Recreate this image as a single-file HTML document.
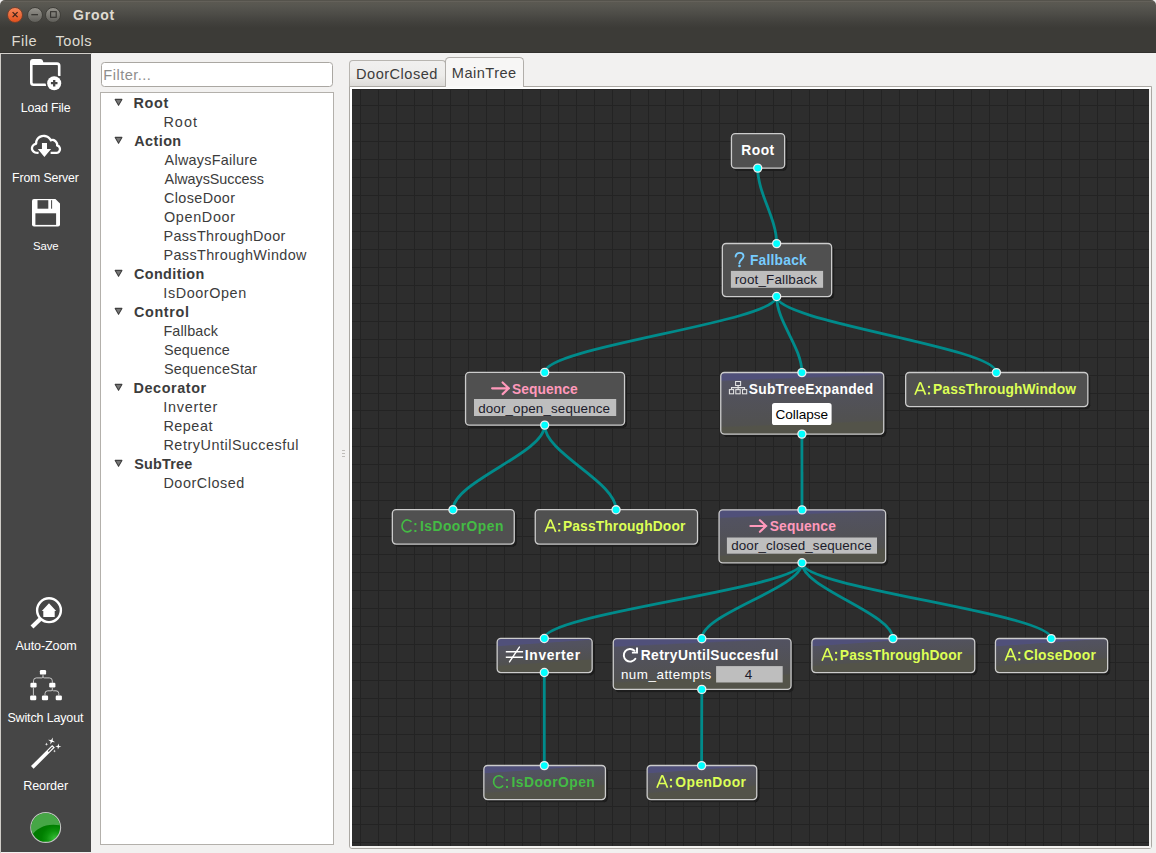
<!DOCTYPE html>
<html><head><meta charset="utf-8"><title>Groot</title>
<style>
html,body{margin:0;padding:0;}
body{width:1156px;height:853px;position:relative;overflow:hidden;background:#f2f1f0;font-family:"Liberation Sans", sans-serif;}
.abs{position:absolute;}
.t{position:absolute;white-space:pre;line-height:normal;font-family:"Liberation Sans", sans-serif;}
#title{left:0;top:0;width:1156px;height:29px;background:linear-gradient(#55534c 0px,#55534c 1px,#64615a 1px,#64615a 2px,#5b5952 2px,#575650 6px,#4d4c47 14px,#42413d 22px,#3c3b37 28px);border-radius:5px 5px 0 0;}
#menubar{left:0;top:28px;width:1156px;height:24px;background:#3c3b37;}
#sep{left:0;top:52px;width:1156px;height:1px;background:#32312e;}
#sep2{left:0;top:53px;width:92px;height:1px;background:#d3d0cb;}
#leftedge{left:0;top:54px;width:1px;height:799px;background:#cfccc7;}
#sidebar{left:1px;top:54px;width:90px;height:798px;background:#464646;}
.wb{position:absolute;top:6.5px;width:16px;height:16px;border-radius:50%;box-sizing:border-box;}
#filter{left:101px;top:62px;width:232px;height:25px;box-sizing:border-box;border:1px solid #aaa7a2;border-radius:3.5px;background:#fff;}
#list{left:100px;top:92px;width:234px;height:753px;box-sizing:border-box;border:1px solid #b3b0ab;background:#fff;}
#pane{left:349px;top:86px;width:803px;height:763px;box-sizing:border-box;border:1px solid #aba8a3;background:#fff;border-radius:0 0 3px 3px;}
#canvasbg{left:352px;top:89px;width:797px;height:757px;background:#2d2d2d;}
svg.cv{position:absolute;left:352px;top:89px;}
#tab1{left:349px;top:60px;width:97px;height:27px;box-sizing:border-box;border:1px solid #b8b5b0;border-bottom:none;border-radius:4px 4px 0 0;background:linear-gradient(#f1f0ef,#edecea 55%,#dcdad7);}
#tab2{left:445px;top:57px;width:79px;height:30px;box-sizing:border-box;border:1px solid #b1aeaa;border-bottom:none;border-radius:4.5px 4.5px 0 0;background:#f7f6f5;}
#tab2b{left:446px;top:86px;width:77px;height:2px;background:#f9f9f8;}
</style></head>
<body>
<div id="title" class="abs"></div><div id="menubar" class="abs"></div><div id="sep" class="abs"></div>
<div class="wb" style="left:7.2px;background:linear-gradient(#f68659,#e2511d);border:1px solid #74402d;"></div>
<div class="wb" style="left:26.5px;background:linear-gradient(#94928b,#605f5a);border:1px solid #403f3a;"></div>
<div class="wb" style="left:45.4px;background:linear-gradient(#94928b,#605f5a);border:1px solid #403f3a;"></div>
<svg class="abs" style="left:0;top:0" width="70" height="29" viewBox="0 0 70 29"><path d="M12.6 12.1L17.6 17.1M17.6 12.1L12.6 17.1" stroke="#3f241b" stroke-width="1.3" fill="none"/><path d="M31.3 14.7H38" stroke="#33322e" stroke-width="1.2" fill="none"/><rect x="50.6" y="11.7" width="5.6" height="5.6" stroke="#33322e" stroke-width="1.1" fill="none"/></svg>
<div id="sidebar" class="abs"></div><div id="sep2" class="abs"></div><div id="leftedge" class="abs"></div>
<svg class="abs" style="left:0;top:0" width="92" height="853" viewBox="0 0 92 853"><g><path d="M47 84.8H33.6Q31.3 84.8 31.3 82.5V62.6M31.3 63.6H57.0Q59.2 63.6 59.2 65.8V76" fill="none" stroke="#fff" stroke-width="2.6" stroke-linejoin="round" stroke-linecap="butt"/><path d="M30.0 64.5V61.8Q30 58.9 32.9 58.9H40.4Q42.5 58.9 43.0 61.0L43.6 64.5Z" fill="#fff"/><circle cx="54.2" cy="83.2" r="8.6" fill="#464646"/><circle cx="54.2" cy="83.2" r="7.0" fill="#fff"/><path d="M50.9 83.2H57.5M54.2 79.9V86.5" stroke="#464646" stroke-width="2.3" fill="none"/></g><g><path d="M38.60 152.90C38.00 152.83 36.02 152.93 35.00 152.50C33.98 152.07 33.00 151.12 32.50 150.30C32.00 149.48 31.83 148.48 32.00 147.60C32.17 146.72 32.82 145.65 33.50 145.00C34.18 144.35 35.67 143.92 36.10 143.70C36.17 143.23 36.12 141.87 36.50 140.90C36.88 139.93 37.52 138.68 38.40 137.90C39.28 137.12 40.73 136.52 41.80 136.20C42.87 135.88 43.80 135.88 44.80 136.00C45.80 136.12 46.93 136.40 47.80 136.90C48.67 137.40 49.50 138.43 50.00 139.00C50.50 139.57 50.67 140.08 50.80 140.30C51.17 140.23 52.20 139.73 53.00 139.90C53.80 140.07 54.93 140.70 55.60 141.30C56.27 141.90 56.75 142.82 57.00 143.50C57.25 144.18 57.08 145.08 57.10 145.40C57.42 145.58 58.52 145.88 59.00 146.50C59.48 147.12 60.00 148.22 60.00 149.10C60.00 149.98 59.53 151.17 59.00 151.80C58.47 152.43 58.20 152.72 56.80 152.90C55.40 153.08 51.63 152.90 50.60 152.90" fill="none" stroke="#fff" stroke-width="2.3" stroke-linecap="butt" stroke-linejoin="round"/><path d="M41.95 142.95H47.0V148.95H51.1L44.4 157.0L37.8 148.95H41.95Z" fill="#fff"/></g><g><path d="M34.0 198.9H55.4L60.0 203.5V224.6Q60.0 226.6 58.0 226.6H34.0Q32.0 226.6 32.0 224.6V200.9Q32.0 198.9 34.0 198.9Z" fill="#fff"/><rect x="37.5" y="200.2" width="10.8" height="8.5" fill="#464646"/><rect x="51.1" y="200.2" width="1.0" height="8.5" fill="#464646"/><rect x="35.4" y="213.3" width="20.7" height="11.6" fill="#464646"/></g><g><circle cx="49.0" cy="610.2" r="11.9" fill="none" stroke="#fff" stroke-width="2.4"/><path d="M40.6 618.8L32.0 627.0" stroke="#fff" stroke-width="4.2" fill="none"/><path d="M49.0 603.2L56.2 610.9H54.7V616.9H43.3V610.9H41.8Z" fill="#fff"/></g><g><rect x="39.9" y="670.0" width="6.2" height="4.6" rx="1.2" fill="#fff"/><rect x="30.4" y="682.8" width="6.2" height="4.6" rx="1.2" fill="#fff"/><rect x="49.2" y="682.8" width="6.2" height="4.6" rx="1.2" fill="#fff"/><rect x="30.1" y="695.6" width="6.2" height="4.6" rx="1.2" fill="#fff"/><rect x="41.9" y="695.6" width="6.2" height="4.6" rx="1.2" fill="#fff"/><rect x="55.7" y="695.6" width="6.2" height="4.6" rx="1.2" fill="#fff"/><path d="M43 674.5V676.8M33.5 683V680.8Q33.5 677.9 36.4 677.9H41.8Q43 677.9 43 676.6Q43 677.9 44.2 677.9H49.4Q52.3 677.9 52.3 680.8V683M33.4 687.5V695.5M52.3 687.5V689.6M45 695.6V693.6Q45 690.8 47.8 690.8H51.1Q52.3 690.8 52.3 689.6Q52.3 690.8 53.5 690.8H56Q58.8 690.8 58.8 693.6V695.6" fill="none" stroke="#cfcfcf" stroke-width="0.95"/></g><g><path d="M32.3 767.4L53.5 746.2" stroke="#fff" stroke-width="3.7" fill="none"/><path d="M48.2 751.5L52.6 747.1" stroke="#464646" stroke-width="1.3" fill="none"/><g transform="rotate(20 51.6 741.0)"><path d="M51.6 737.3L52.414 740.186L55.300000000000004 741.0L52.414 741.814L51.6 744.7L50.786 741.814L47.9 741.0L50.786 740.186Z" fill="#fff"/></g><g transform="rotate(6 58.3 746.5)"><path d="M58.3 743.4L58.982 745.818L61.4 746.5L58.982 747.182L58.3 749.6L57.617999999999995 747.182L55.199999999999996 746.5L57.617999999999995 745.818Z" fill="#fff"/></g><path d="M46.5 742.4000000000001L46.896 743.8040000000001L48.3 744.2L46.896 744.596L46.5 746.0L46.104 744.596L44.7 744.2L46.104 743.8040000000001Z" fill="#fff"/><path d="M54.5 749.6L54.83 750.77L56.0 751.1L54.83 751.4300000000001L54.5 752.6L54.17 751.4300000000001L53.0 751.1L54.17 750.77Z" fill="#fff"/></g><defs><radialGradient id="led" gradientUnits="userSpaceOnUse" cx="55" cy="839" r="17"><stop offset="0" stop-color="#3cc23c"/><stop offset="0.25" stop-color="#22a822"/><stop offset="0.5" stop-color="#0c920c"/><stop offset="0.8" stop-color="#008000"/><stop offset="1" stop-color="#007a00"/></radialGradient><clipPath id="ledc"><circle cx="45.7" cy="827.5" r="14.3"/></clipPath></defs><circle cx="45.7" cy="827.5" r="14.9" fill="url(#led)" stroke="#c4c4c4" stroke-width="1.1"/><path d="M30 838C36 828 46 822.5 61 825.5V810H30Z" fill="#55b055" opacity="0.82" clip-path="url(#ledc)"/></svg>
<div id="filter" class="abs"></div><div id="list" class="abs"></div>
<svg class="abs" style="left:100px;top:92px" width="40" height="752" viewBox="100 92 40 752"><defs><linearGradient id="ag" x1="0" y1="0" x2="0" y2="1"><stop offset="0" stop-color="#6e6e6e"/><stop offset="1" stop-color="#3f3f3f"/></linearGradient></defs><path d="M115.2 99.4H121.9L118.55 105.3Z" fill="#777" stroke="#404040" stroke-width="1.1" stroke-linejoin="round"/><path d="M115.2 137.4H121.9L118.55 143.3Z" fill="#777" stroke="#404040" stroke-width="1.1" stroke-linejoin="round"/><path d="M115.2 270.4H121.9L118.55 276.3Z" fill="#777" stroke="#404040" stroke-width="1.1" stroke-linejoin="round"/><path d="M115.2 308.4H121.9L118.55 314.3Z" fill="#777" stroke="#404040" stroke-width="1.1" stroke-linejoin="round"/><path d="M115.2 384.4H121.9L118.55 390.3Z" fill="#777" stroke="#404040" stroke-width="1.1" stroke-linejoin="round"/><path d="M115.2 460.4H121.9L118.55 466.3Z" fill="#777" stroke="#404040" stroke-width="1.1" stroke-linejoin="round"/></svg>
<div class="abs" style="left:342px;top:450px;width:3px;height:1px;background:#bfbdb9"></div><div class="abs" style="left:342px;top:453px;width:3px;height:1px;background:#bfbdb9"></div><div class="abs" style="left:342px;top:456px;width:3px;height:1px;background:#bfbdb9"></div>
<div id="tab1" class="abs"></div><div id="pane" class="abs"></div><div id="tab2" class="abs"></div><div id="tab2b" class="abs"></div>
<div class="abs" style="left:1149px;top:89px;width:2px;height:759px;background:#f3f2f0"></div><div class="abs" style="left:352px;top:846px;width:799px;height:2px;background:#f3f2f0"></div>
<div id="canvasbg" class="abs"></div>
<svg class="cv" width="797" height="757" viewBox="352 89 797 757" font-family='"Liberation Sans", sans-serif'>
<defs><filter id="sh" x="-10%" y="-20%" width="125%" height="150%"><feGaussianBlur stdDeviation="0.7"/></filter>
<linearGradient id="g_subtree" gradientUnits="userSpaceOnUse" x1="720.50" y1="379.90" x2="722.35" y2="427.93"><stop offset="0" stop-color="#50507a"/><stop offset="0.04" stop-color="#525261"/><stop offset="0.96" stop-color="#515150"/><stop offset="1" stop-color="#535349"/></linearGradient>
<linearGradient id="g_seq2" gradientUnits="userSpaceOnUse" x1="718.80" y1="517.20" x2="720.56" y2="556.62"><stop offset="0" stop-color="#50507a"/><stop offset="0.04" stop-color="#525261"/><stop offset="0.96" stop-color="#515150"/><stop offset="1" stop-color="#535349"/></linearGradient>
<linearGradient id="g_inverter" gradientUnits="userSpaceOnUse" x1="496.90" y1="645.80" x2="498.31" y2="666.30"><stop offset="0" stop-color="#50507a"/><stop offset="0.04" stop-color="#525261"/><stop offset="0.96" stop-color="#515150"/><stop offset="1" stop-color="#535349"/></linearGradient>
<linearGradient id="g_retry" gradientUnits="userSpaceOnUse" x1="613.00" y1="646.00" x2="614.73" y2="683.22"><stop offset="0" stop-color="#50507a"/><stop offset="0.04" stop-color="#525261"/><stop offset="0.96" stop-color="#515150"/><stop offset="1" stop-color="#535349"/></linearGradient>
<linearGradient id="g_ptd2" gradientUnits="userSpaceOnUse" x1="811.60" y1="645.90" x2="813.01" y2="666.30"><stop offset="0" stop-color="#50507a"/><stop offset="0.04" stop-color="#525261"/><stop offset="0.96" stop-color="#515150"/><stop offset="1" stop-color="#535349"/></linearGradient>
<linearGradient id="g_closedoor" gradientUnits="userSpaceOnUse" x1="995.20" y1="645.90" x2="996.61" y2="666.30"><stop offset="0" stop-color="#50507a"/><stop offset="0.04" stop-color="#525261"/><stop offset="0.96" stop-color="#515150"/><stop offset="1" stop-color="#535349"/></linearGradient>
<linearGradient id="g_isdoor2" gradientUnits="userSpaceOnUse" x1="483.60" y1="772.90" x2="485.01" y2="793.30"><stop offset="0" stop-color="#50507a"/><stop offset="0.04" stop-color="#525261"/><stop offset="0.96" stop-color="#515150"/><stop offset="1" stop-color="#535349"/></linearGradient>
<linearGradient id="g_opendoor" gradientUnits="userSpaceOnUse" x1="646.90" y1="772.90" x2="648.31" y2="793.30"><stop offset="0" stop-color="#50507a"/><stop offset="0.04" stop-color="#525261"/><stop offset="0.96" stop-color="#515150"/><stop offset="1" stop-color="#535349"/></linearGradient>
</defs>
<path d="M360.5 89V846M378.5 89V846M396.5 89V846M414.5 89V846M432.5 89V846M450.5 89V846M468.5 89V846M486.5 89V846M504.5 89V846M522.5 89V846M540.5 89V846M558.5 89V846M576.5 89V846M594.5 89V846M612.5 89V846M630.5 89V846M648.5 89V846M665.5 89V846M683.5 89V846M701.5 89V846M719.5 89V846M737.5 89V846M755.5 89V846M773.5 89V846M791.5 89V846M809.5 89V846M827.5 89V846M845.5 89V846M863.5 89V846M881.5 89V846M899.5 89V846M917.5 89V846M935.5 89V846M953.5 89V846M971.5 89V846M989.5 89V846M1007.5 89V846M1025.5 89V846M1043.5 89V846M1061.5 89V846M1079.5 89V846M1097.5 89V846M1115.5 89V846M1133.5 89V846M352 105.5H1149M352 123.5H1149M352 141.5H1149M352 159.5H1149M352 177.5H1149M352 195.5H1149M352 213.5H1149M352 231.5H1149M352 249.5H1149M352 267.5H1149M352 285.5H1149M352 303.5H1149M352 321.5H1149M352 339.5H1149M352 357.5H1149M352 375.5H1149M352 393.5H1149M352 410.5H1149M352 428.5H1149M352 446.5H1149M352 464.5H1149M352 482.5H1149M352 500.5H1149M352 518.5H1149M352 536.5H1149M352 554.5H1149M352 572.5H1149M352 590.5H1149M352 608.5H1149M352 626.5H1149M352 644.5H1149M352 662.5H1149M352 680.5H1149M352 698.5H1149M352 716.5H1149M352 734.5H1149M352 752.5H1149M352 770.5H1149M352 788.5H1149M352 806.5H1149M352 824.5H1149M352 842.5H1149" stroke="#232323" stroke-width="1" fill="none" shape-rendering="crispEdges"/>
<path d="M352 89.5H1149" stroke="#262626" stroke-width="1" shape-rendering="crispEdges"/>
<path d="M757.70 168.20C757.70 193.30 776.65 218.40 776.65 243.50" fill="none" stroke="#008b8b" stroke-width="2.8"/>
<path d="M776.65 296.60C776.65 321.83 544.70 347.07 544.70 372.30" fill="none" stroke="#008b8b" stroke-width="2.8"/>
<path d="M776.65 296.60C776.65 321.90 801.90 347.20 801.90 372.50" fill="none" stroke="#008b8b" stroke-width="2.8"/>
<path d="M776.65 296.60C776.65 321.90 996.40 347.20 996.40 372.50" fill="none" stroke="#008b8b" stroke-width="2.8"/>
<path d="M544.70 425.20C544.70 453.37 452.95 481.53 452.95 509.70" fill="none" stroke="#008b8b" stroke-width="2.8"/>
<path d="M544.70 425.20C544.70 453.37 616.05 481.53 616.05 509.70" fill="none" stroke="#008b8b" stroke-width="2.8"/>
<path d="M801.90 434.20C801.90 459.40 802.00 484.60 802.00 509.80" fill="none" stroke="#008b8b" stroke-width="2.8"/>
<path d="M802.00 562.90C802.00 588.07 544.30 613.23 544.30 638.40" fill="none" stroke="#008b8b" stroke-width="2.8"/>
<path d="M802.00 562.90C802.00 588.13 701.80 613.37 701.80 638.60" fill="none" stroke="#008b8b" stroke-width="2.8"/>
<path d="M802.00 562.90C802.00 588.10 892.95 613.30 892.95 638.50" fill="none" stroke="#008b8b" stroke-width="2.8"/>
<path d="M802.00 562.90C802.00 588.10 1051.20 613.30 1051.20 638.50" fill="none" stroke="#008b8b" stroke-width="2.8"/>
<path d="M544.30 672.60C544.30 703.57 544.30 734.53 544.30 765.50" fill="none" stroke="#008b8b" stroke-width="2.8"/>
<path d="M701.80 689.50C701.80 714.83 701.60 740.17 701.60 765.50" fill="none" stroke="#008b8b" stroke-width="2.8"/>
<rect x="733.30" y="135.70" width="53.80" height="35.20" rx="4.2" fill="#1a1a1a" opacity="0.9" filter="url(#sh)"/>
<rect x="731.45" y="133.70" width="53.20" height="34.45" rx="3.7" fill="#505050" stroke="#cccccc" stroke-width="1.3"/>
<circle cx="757.70" cy="168.10" r="4.05" fill="#00ffff" stroke="#ececec" stroke-width="1.3"/>
<rect x="724.20" y="245.50" width="109.90" height="53.80" rx="4.2" fill="#1a1a1a" opacity="0.9" filter="url(#sh)"/>
<rect x="722.35" y="243.50" width="109.30" height="53.05" rx="3.7" fill="#505050" stroke="#cccccc" stroke-width="1.3"/>
<g fill="none" stroke="#77ccff" stroke-width="1.85" stroke-linecap="round"><path d="M735.60 256.60 C736.00 253.60 738.00 252.80 739.80 252.80 C742.20 252.80 743.50 254.40 743.50 256.30 C743.50 259.40 739.30 260.20 739.30 263.40"/></g><circle cx="739.50" cy="266.00" r="1.35" fill="#77ccff"/>
<rect x="730.90" y="270.90" width="92.20" height="16.90" fill="#bebebe"/>
<circle cx="776.65" cy="243.60" r="4.05" fill="#00ffff" stroke="#ececec" stroke-width="1.3"/>
<circle cx="776.65" cy="296.50" r="4.05" fill="#00ffff" stroke="#ececec" stroke-width="1.3"/>
<rect x="467.40" y="374.30" width="159.60" height="53.60" rx="4.2" fill="#1a1a1a" opacity="0.9" filter="url(#sh)"/>
<rect x="465.55" y="372.30" width="159.00" height="52.85" rx="3.7" fill="#505050" stroke="#cccccc" stroke-width="1.3"/>
<path d="M492.10 388.30H509.00M502.60 382.50L508.70 388.30L502.60 394.10" fill="none" stroke="#ff99bb" stroke-width="2.15" stroke-linecap="round" stroke-linejoin="miter"/>
<rect x="474.00" y="399.00" width="142.20" height="17.00" fill="#bebebe"/>
<circle cx="544.70" cy="372.40" r="4.05" fill="#00ffff" stroke="#ececec" stroke-width="1.3"/>
<circle cx="544.70" cy="425.10" r="4.05" fill="#00ffff" stroke="#ececec" stroke-width="1.3"/>
<rect x="722.60" y="374.50" width="163.60" height="62.40" rx="4.2" fill="#1a1a1a" opacity="0.9" filter="url(#sh)"/>
<rect x="720.75" y="372.50" width="163.00" height="61.65" rx="3.7" fill="url(#g_subtree)" stroke="#cccccc" stroke-width="1.3"/>
<g fill="none" stroke="#e4e4e4" stroke-width="1.05"><rect x="735.60" y="381.50" width="5.0" height="4.0"/><rect x="729.40" y="389.60" width="4.2" height="4.2"/><rect x="735.80" y="389.60" width="4.4" height="4.2"/><rect x="742.50" y="389.60" width="4.2" height="4.2"/><path d="M738.10 385.50V389.60M731.50 389.60V387.60H744.60V389.60"/></g>
<rect x="772.00" y="403.10" width="59.60" height="22.00" rx="2.6" fill="#ffffff"/>
<circle cx="801.90" cy="372.60" r="4.05" fill="#00ffff" stroke="#ececec" stroke-width="1.3"/>
<circle cx="801.90" cy="434.10" r="4.05" fill="#00ffff" stroke="#ececec" stroke-width="1.3"/>
<rect x="907.50" y="374.50" width="182.80" height="34.80" rx="4.2" fill="#1a1a1a" opacity="0.9" filter="url(#sh)"/>
<rect x="905.65" y="372.50" width="182.20" height="34.05" rx="3.7" fill="#505050" stroke="#cccccc" stroke-width="1.3"/>
<g fill="none" stroke="#ddff55" stroke-width="1.7" stroke-linejoin="round"><path d="M915.00 394.80L919.85 382.80H920.65L925.50 394.80M916.90 390.50H923.60"/></g><rect x="927.90" y="385.70" width="2.2" height="2.2" rx="0.7" fill="#ddff55"/><rect x="927.90" y="392.20" width="2.2" height="2.2" rx="0.7" fill="#ddff55"/>
<circle cx="996.40" cy="372.60" r="4.05" fill="#00ffff" stroke="#ececec" stroke-width="1.3"/>
<rect x="394.20" y="511.70" width="122.50" height="35.10" rx="4.2" fill="#1a1a1a" opacity="0.9" filter="url(#sh)"/>
<rect x="392.35" y="509.70" width="121.90" height="34.35" rx="3.7" fill="#505050" stroke="#cccccc" stroke-width="1.3"/>
<path d="M411.45 522.08A5.35 5.95 0 1 0 411.45 529.72" fill="none" stroke="#44bb44" stroke-width="1.65" stroke-linecap="butt"/><rect x="414.35" y="523.10" width="2.1" height="2.2" rx="0.7" fill="#44bb44"/><rect x="414.35" y="529.90" width="2.1" height="2.2" rx="0.7" fill="#44bb44"/>
<circle cx="452.95" cy="509.80" r="4.05" fill="#00ffff" stroke="#ececec" stroke-width="1.3"/>
<rect x="537.10" y="511.70" width="162.90" height="35.10" rx="4.2" fill="#1a1a1a" opacity="0.9" filter="url(#sh)"/>
<rect x="535.25" y="509.70" width="162.30" height="34.35" rx="3.7" fill="#505050" stroke="#cccccc" stroke-width="1.3"/>
<g fill="none" stroke="#ddff55" stroke-width="1.7" stroke-linejoin="round"><path d="M545.20 532.00L550.05 520.00H550.85L555.70 532.00M547.10 527.70H553.80"/></g><rect x="558.10" y="522.90" width="2.2" height="2.2" rx="0.7" fill="#ddff55"/><rect x="558.10" y="529.40" width="2.2" height="2.2" rx="0.7" fill="#ddff55"/>
<circle cx="616.05" cy="509.80" r="4.05" fill="#00ffff" stroke="#ececec" stroke-width="1.3"/>
<rect x="720.90" y="511.80" width="167.20" height="53.80" rx="4.2" fill="#1a1a1a" opacity="0.9" filter="url(#sh)"/>
<rect x="719.05" y="509.80" width="166.60" height="53.05" rx="3.7" fill="url(#g_seq2)" stroke="#cccccc" stroke-width="1.3"/>
<path d="M750.40 526.00H766.30M759.90 520.20L766.00 526.00L759.90 531.80" fill="none" stroke="#ff99bb" stroke-width="2.15" stroke-linecap="round" stroke-linejoin="miter"/>
<rect x="726.90" y="537.50" width="150.10" height="16.20" fill="#bebebe"/>
<circle cx="802.00" cy="509.90" r="4.05" fill="#00ffff" stroke="#ececec" stroke-width="1.3"/>
<circle cx="802.00" cy="562.80" r="4.05" fill="#00ffff" stroke="#ececec" stroke-width="1.3"/>
<rect x="499.00" y="640.40" width="95.60" height="34.90" rx="4.2" fill="#1a1a1a" opacity="0.9" filter="url(#sh)"/>
<rect x="497.15" y="638.40" width="95.00" height="34.15" rx="3.7" fill="url(#g_inverter)" stroke="#cccccc" stroke-width="1.3"/>
<path d="M505.80 651.80H523.10M505.80 657.25H523.10" stroke="#fff" stroke-width="1.6" fill="none"/><path d="M509.50 661.80L519.40 647.10" stroke="#fff" stroke-width="1.4" stroke-linecap="round" fill="none"/>
<circle cx="544.30" cy="638.50" r="4.05" fill="#00ffff" stroke="#ececec" stroke-width="1.3"/>
<circle cx="544.30" cy="672.50" r="4.05" fill="#00ffff" stroke="#ececec" stroke-width="1.3"/>
<rect x="615.10" y="640.60" width="178.40" height="51.60" rx="4.2" fill="#1a1a1a" opacity="0.9" filter="url(#sh)"/>
<rect x="613.25" y="638.60" width="177.80" height="50.85" rx="3.7" fill="url(#g_retry)" stroke="#cccccc" stroke-width="1.3"/>
<path d="M635.38 658.73A6.3 6.3 0 1 1 634.48 650.77" fill="none" stroke="#fff" stroke-width="1.95" stroke-linecap="round"/><path d="M637.00 647.60V652.60H631.90" fill="none" stroke="#fff" stroke-width="1.95" stroke-linejoin="miter"/>
<rect x="716.10" y="666.10" width="66.60" height="16.40" fill="#bebebe"/>
<circle cx="701.80" cy="638.70" r="4.05" fill="#00ffff" stroke="#ececec" stroke-width="1.3"/>
<circle cx="701.80" cy="689.40" r="4.05" fill="#00ffff" stroke="#ececec" stroke-width="1.3"/>
<rect x="813.70" y="640.50" width="163.50" height="34.80" rx="4.2" fill="#1a1a1a" opacity="0.9" filter="url(#sh)"/>
<rect x="811.85" y="638.50" width="162.90" height="34.05" rx="3.7" fill="url(#g_ptd2)" stroke="#cccccc" stroke-width="1.3"/>
<g fill="none" stroke="#ddff55" stroke-width="1.7" stroke-linejoin="round"><path d="M822.10 660.80L826.95 648.80H827.75L832.60 660.80M824.00 656.50H830.70"/></g><rect x="835.00" y="651.70" width="2.2" height="2.2" rx="0.7" fill="#ddff55"/><rect x="835.00" y="658.20" width="2.2" height="2.2" rx="0.7" fill="#ddff55"/>
<circle cx="892.95" cy="638.60" r="4.05" fill="#00ffff" stroke="#ececec" stroke-width="1.3"/>
<rect x="997.30" y="640.50" width="112.80" height="34.80" rx="4.2" fill="#1a1a1a" opacity="0.9" filter="url(#sh)"/>
<rect x="995.45" y="638.50" width="112.20" height="34.05" rx="3.7" fill="url(#g_closedoor)" stroke="#cccccc" stroke-width="1.3"/>
<g fill="none" stroke="#ddff55" stroke-width="1.7" stroke-linejoin="round"><path d="M1005.30 660.80L1010.15 648.80H1010.95L1015.80 660.80M1007.20 656.50H1013.90"/></g><rect x="1018.20" y="651.70" width="2.2" height="2.2" rx="0.7" fill="#ddff55"/><rect x="1018.20" y="658.20" width="2.2" height="2.2" rx="0.7" fill="#ddff55"/>
<circle cx="1051.20" cy="638.60" r="4.05" fill="#00ffff" stroke="#ececec" stroke-width="1.3"/>
<rect x="485.70" y="767.50" width="122.20" height="34.80" rx="4.2" fill="#1a1a1a" opacity="0.9" filter="url(#sh)"/>
<rect x="483.85" y="765.50" width="121.60" height="34.05" rx="3.7" fill="url(#g_isdoor2)" stroke="#cccccc" stroke-width="1.3"/>
<path d="M503.05 777.88A5.35 5.95 0 1 0 503.05 785.52" fill="none" stroke="#44bb44" stroke-width="1.65" stroke-linecap="butt"/><rect x="505.95" y="778.90" width="2.1" height="2.2" rx="0.7" fill="#44bb44"/><rect x="505.95" y="785.70" width="2.1" height="2.2" rx="0.7" fill="#44bb44"/>
<circle cx="544.30" cy="765.60" r="4.05" fill="#00ffff" stroke="#ececec" stroke-width="1.3"/>
<rect x="649.00" y="767.50" width="110.20" height="34.80" rx="4.2" fill="#1a1a1a" opacity="0.9" filter="url(#sh)"/>
<rect x="647.15" y="765.50" width="109.60" height="34.05" rx="3.7" fill="url(#g_opendoor)" stroke="#cccccc" stroke-width="1.3"/>
<g fill="none" stroke="#ddff55" stroke-width="1.7" stroke-linejoin="round"><path d="M657.00 787.80L661.85 775.80H662.65L667.50 787.80M658.90 783.50H665.60"/></g><rect x="669.90" y="778.70" width="2.2" height="2.2" rx="0.7" fill="#ddff55"/><rect x="669.90" y="785.20" width="2.2" height="2.2" rx="0.7" fill="#ddff55"/>
<circle cx="701.60" cy="765.60" r="4.05" fill="#00ffff" stroke="#ececec" stroke-width="1.3"/>
<text x="741.20" y="154.90" font-size="13.8" font-weight="700" fill="#ffffff" letter-spacing="0.529" >Root</text>
<text x="749.90" y="264.70" font-size="13.8" font-weight="700" fill="#77ccff" letter-spacing="0.231" >Fallback</text>
<text x="734.73" y="283.90" font-size="13.4" font-weight="400" fill="#1b1b2b" letter-spacing="0.164" >root_Fallback</text>
<text x="511.95" y="393.60" font-size="13.8" font-weight="700" fill="#ff99bb" letter-spacing="0.069" >Sequence</text>
<text x="478.16" y="412.60" font-size="13.4" font-weight="400" fill="#1b1b2b" letter-spacing="0.138" >door_open_sequence</text>
<text x="748.65" y="393.70" font-size="13.8" font-weight="700" fill="#ffffff" letter-spacing="0.304" >SubTreeExpanded</text>
<text x="775.42" y="418.70" font-size="13.6" font-weight="400" fill="#000" letter-spacing="-0.040" >Collapse</text>
<text x="933.00" y="393.80" font-size="13.8" font-weight="700" fill="#ddff55" letter-spacing="0.127" >PassThroughWindow</text>
<text x="420.00" y="530.90" font-size="13.8" font-weight="700" fill="#44bb44" letter-spacing="0.485" >IsDoorOpen</text>
<text x="562.90" y="530.90" font-size="13.8" font-weight="700" fill="#ddff55" letter-spacing="0.151" >PassThroughDoor</text>
<text x="769.75" y="531.10" font-size="13.8" font-weight="700" fill="#ff99bb" letter-spacing="0.126" >Sequence</text>
<text x="731.26" y="550.40" font-size="13.4" font-weight="400" fill="#1b1b2b" letter-spacing="0.101" >door_closed_sequence</text>
<text x="524.80" y="659.70" font-size="13.8" font-weight="700" fill="#ffffff" letter-spacing="0.667" >Inverter</text>
<text x="640.80" y="660.00" font-size="13.8" font-weight="700" fill="#ffffff" letter-spacing="0.361" >RetryUntilSuccesful</text>
<text x="620.93" y="679.00" font-size="13.4" font-weight="400" fill="#ffffff" letter-spacing="0.503" >num_attempts</text>
<text x="744.72" y="679.00" font-size="13.4" font-weight="400" fill="#1b1b2b" letter-spacing="0.000" >4</text>
<text x="839.80" y="659.70" font-size="13.8" font-weight="700" fill="#ddff55" letter-spacing="0.137" >PassThroughDoor</text>
<text x="1023.65" y="659.70" font-size="13.8" font-weight="700" fill="#ddff55" letter-spacing="0.297" >CloseDoor</text>
<text x="511.50" y="786.70" font-size="13.8" font-weight="700" fill="#44bb44" letter-spacing="0.474" >IsDoorOpen</text>
<text x="675.35" y="786.70" font-size="13.8" font-weight="700" fill="#ddff55" letter-spacing="0.441" >OpenDoor</text>
</svg>
<span class="t" style="left:73.04px;top:7.00px;font-size:14.0px;font-weight:700;color:#dfdbd2;letter-spacing:0.767px;">Groot</span>
<span class="t" style="left:11.53px;top:33.00px;font-size:14.6px;font-weight:400;color:#dfdbd2;letter-spacing:0.548px;">File</span>
<span class="t" style="left:55.41px;top:33.00px;font-size:14.6px;font-weight:400;color:#dfdbd2;letter-spacing:0.530px;">Tools</span>
<span class="t" style="left:20.76px;top:101.00px;font-size:12.41px;font-weight:400;color:#fff;letter-spacing:-0.150px;">Load File</span>
<span class="t" style="left:12.12px;top:171.00px;font-size:12.29px;font-weight:400;color:#fff;letter-spacing:-0.149px;">From Server</span>
<span class="t" style="left:32.99px;top:240.00px;font-size:11.42px;font-weight:400;color:#fff;letter-spacing:-0.149px;">Save</span>
<span class="t" style="left:15.50px;top:639.00px;font-size:12.6px;font-weight:400;color:#fff;letter-spacing:-0.116px;">Auto-Zoom</span>
<span class="t" style="left:7.44px;top:711.00px;font-size:12.5px;font-weight:400;color:#fff;letter-spacing:-0.152px;">Switch Layout</span>
<span class="t" style="left:23.19px;top:779.00px;font-size:12.6px;font-weight:400;color:#fff;letter-spacing:-0.092px;">Reorder</span>
<span class="t" style="left:103.33px;top:67.00px;font-size:14.6px;font-weight:400;color:#8e8e8c;letter-spacing:0.468px;">Filter...</span>
<span class="t" style="left:356.03px;top:66.00px;font-size:14.6px;font-weight:400;color:#3c3c3c;letter-spacing:0.485px;">DoorClosed</span>
<span class="t" style="left:451.83px;top:65.00px;font-size:14.6px;font-weight:400;color:#3c3c3c;letter-spacing:0.464px;">MainTree</span>
<span class="t" style="left:133.56px;top:95.00px;font-size:14.4px;font-weight:700;color:#3c3c3c;letter-spacing:0.622px;">Root</span>
<span class="t" style="left:163.45px;top:114.00px;font-size:14.4px;font-weight:400;color:#3c3c3c;letter-spacing:1.025px;">Root</span>
<span class="t" style="left:134.21px;top:133.00px;font-size:14.4px;font-weight:700;color:#3c3c3c;letter-spacing:0.434px;">Action</span>
<span class="t" style="left:164.60px;top:152.00px;font-size:14.4px;font-weight:400;color:#3c3c3c;letter-spacing:0.264px;">AlwaysFailure</span>
<span class="t" style="left:164.60px;top:171.00px;font-size:14.4px;font-weight:400;color:#3c3c3c;letter-spacing:-0.061px;">AlwaysSuccess</span>
<span class="t" style="left:163.88px;top:190.00px;font-size:14.4px;font-weight:400;color:#3c3c3c;letter-spacing:0.397px;">CloseDoor</span>
<span class="t" style="left:163.95px;top:209.00px;font-size:14.4px;font-weight:400;color:#3c3c3c;letter-spacing:0.671px;">OpenDoor</span>
<span class="t" style="left:163.45px;top:228.00px;font-size:14.4px;font-weight:400;color:#3c3c3c;letter-spacing:0.370px;">PassThroughDoor</span>
<span class="t" style="left:163.45px;top:247.00px;font-size:14.4px;font-weight:400;color:#3c3c3c;letter-spacing:0.390px;">PassThroughWindow</span>
<span class="t" style="left:133.92px;top:266.00px;font-size:14.4px;font-weight:700;color:#3c3c3c;letter-spacing:0.409px;">Condition</span>
<span class="t" style="left:163.30px;top:285.00px;font-size:14.4px;font-weight:400;color:#3c3c3c;letter-spacing:0.593px;">IsDoorOpen</span>
<span class="t" style="left:133.92px;top:304.00px;font-size:14.4px;font-weight:700;color:#3c3c3c;letter-spacing:0.644px;">Control</span>
<span class="t" style="left:163.45px;top:323.00px;font-size:14.4px;font-weight:400;color:#3c3c3c;letter-spacing:0.137px;">Fallback</span>
<span class="t" style="left:163.95px;top:342.00px;font-size:14.4px;font-weight:400;color:#3c3c3c;letter-spacing:0.155px;">Sequence</span>
<span class="t" style="left:163.95px;top:361.00px;font-size:14.4px;font-weight:400;color:#3c3c3c;letter-spacing:0.170px;">SequenceStar</span>
<span class="t" style="left:133.56px;top:380.00px;font-size:14.4px;font-weight:700;color:#3c3c3c;letter-spacing:0.577px;">Decorator</span>
<span class="t" style="left:163.30px;top:399.00px;font-size:14.4px;font-weight:400;color:#3c3c3c;letter-spacing:0.752px;">Inverter</span>
<span class="t" style="left:163.45px;top:418.00px;font-size:14.4px;font-weight:400;color:#3c3c3c;letter-spacing:0.512px;">Repeat</span>
<span class="t" style="left:163.45px;top:437.00px;font-size:14.4px;font-weight:400;color:#3c3c3c;letter-spacing:0.528px;">RetryUntilSuccesful</span>
<span class="t" style="left:134.14px;top:456.00px;font-size:14.4px;font-weight:700;color:#3c3c3c;letter-spacing:0.232px;">SubTree</span>
<span class="t" style="left:163.45px;top:475.00px;font-size:14.4px;font-weight:400;color:#3c3c3c;letter-spacing:0.533px;">DoorClosed</span>
</body></html>
